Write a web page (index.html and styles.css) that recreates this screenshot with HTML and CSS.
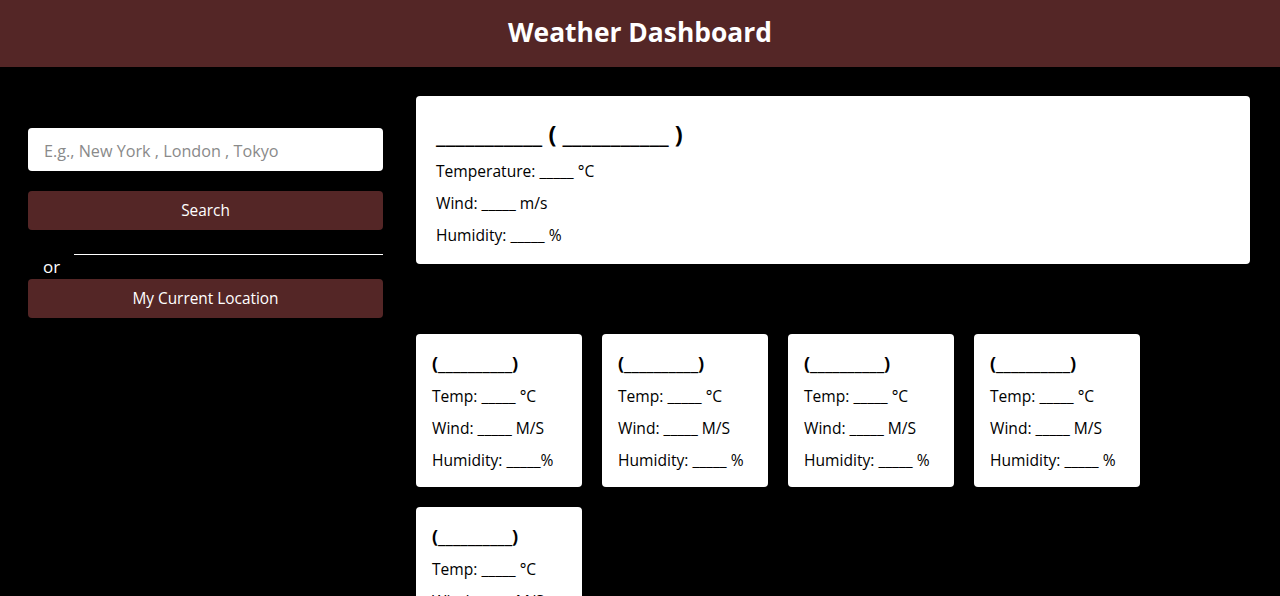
FILE: index.html
```html
<!DOCTYPE html>
<html lang="en">
<head>
<meta charset="UTF-8">
<title>Weather Dashboard</title>
<link rel="stylesheet" href="styles.css">
</head>
<body>
<header class="top-bar">
  <h1 class="app-title">Weather Dashboard</h1>
</header>
<main class="layout">
  <section class="side">
    <input class="city-input" type="text" placeholder="E.g., New York , London , Tokyo">
    <button class="btn">Search</button>
    <div class="divider">
      <span class="or">or</span>
      <span class="rule"></span>
    </div>
    <button class="btn">My Current Location</button>
  </section>
  <section class="content">
    <div class="current">
      <h2 class="current-title">___________ ( ___________ )</h2>
      <p class="line">Temperature: _____ °C</p>
      <p class="line">Wind: _____ m/s</p>
      <p class="line">Humidity: _____ %</p>
    </div>
    <div class="forecast">
      <div class="day">
        <h3 class="day-title">(__________)</h3>
        <p class="line">Temp: _____ °C</p>
        <p class="line">Wind: _____ M/S</p>
        <p class="line">Humidity: _____%</p>
      </div>
      <div class="day">
        <h3 class="day-title">(__________)</h3>
        <p class="line">Temp: _____ °C</p>
        <p class="line">Wind: _____ M/S</p>
        <p class="line">Humidity: _____ %</p>
      </div>
      <div class="day">
        <h3 class="day-title">(__________)</h3>
        <p class="line">Temp: _____ °C</p>
        <p class="line">Wind: _____ M/S</p>
        <p class="line">Humidity: _____ %</p>
      </div>
      <div class="day">
        <h3 class="day-title">(__________)</h3>
        <p class="line">Temp: _____ °C</p>
        <p class="line">Wind: _____ M/S</p>
        <p class="line">Humidity: _____ %</p>
      </div>
      <div class="day">
        <h3 class="day-title">(__________)</h3>
        <p class="line">Temp: _____ °C</p>
        <p class="line">Wind: _____ M/S</p>
        <p class="line">Humidity: _____ %</p>
      </div>
    </div>
  </section>
</main>
</body>
</html>
```
FILE: styles.css
```css
* { box-sizing: border-box; }
html, body { margin: 0; padding: 0; }
body {
  background: #000;
  font-family: "Open Sans", "Noto Sans", sans-serif;
  color: #000;
}
.top-bar {
  background: #542626;
  height: 67px;
  display: flex;
  align-items: center;
  justify-content: center;
  padding-bottom: 3px;
}
.app-title {
  margin: 0;
  color: #fff;
  font-size: 26.4px;
  font-weight: 700;
  line-height: 34px;
}
.layout {
  display: grid;
  grid-template-columns: 355px 1fr;
  column-gap: 33px;
  padding: 29px 30px 0 28px;
}
.side {
  display: flex;
  flex-direction: column;
  padding-top: 32px;
}
.city-input {
  height: 43px;
  border: none;
  border-radius: 4px;
  background: #fff;
  padding: 2px 15px 0 16px;
  font-family: inherit;
  font-size: 16.2px;
  color: #000;
  outline: none;
}
.city-input::placeholder { color: #8a8a8a; }
.btn {
  height: 39px;
  margin-top: 20px;
  border: none;
  border-radius: 4px;
  background: #542626;
  color: #fff;
  font-family: inherit;
  font-size: 15.4px;
}
.divider {
  display: flex;
  height: 25px;
  margin-top: 24px;
}
.divider + .btn { margin-top: 0; }
.or {
  align-self: flex-end;
  color: #fff;
  font-size: 17px;
  line-height: 24px;
  padding-left: 15px;
}
.rule {
  flex: 1;
  margin-left: 14px;
  border-top: 1px solid #fff;
}
.current {
  background: #fff;
  border-radius: 4px;
  padding: 23px 20px 13px;
}
.current-title {
  margin: 0 0 6px;
  font-size: 23.5px;
  font-weight: 700;
  line-height: 30px;
}
.line {
  margin: 0;
  font-size: 15.6px;
  line-height: 32px;
}
.forecast {
  display: flex;
  flex-wrap: wrap;
  gap: 20px;
  margin-top: 70px;
}
.day {
  width: 166px;
  background: #fff;
  border-radius: 4px;
  padding: 16px 16px 11px;
}
.day-title {
  margin: 0 0 4px;
  font-size: 18px;
  font-weight: 700;
  line-height: 26px;
}
```
